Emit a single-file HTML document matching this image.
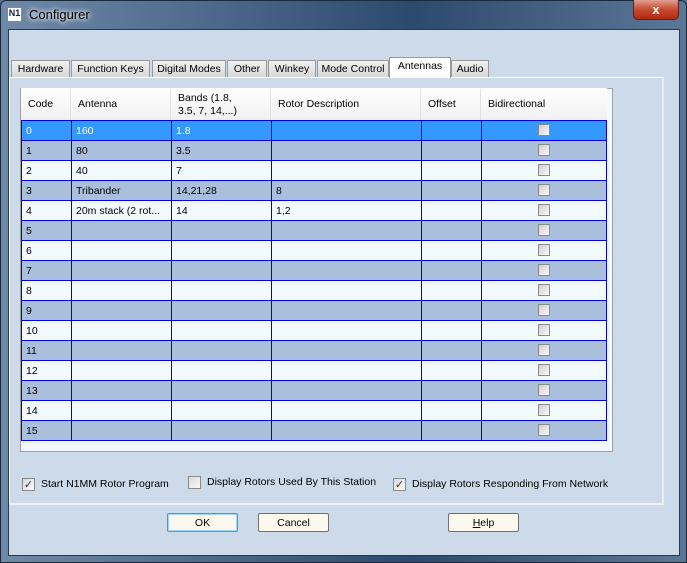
<!DOCTYPE html>
<html><head><style>
*{margin:0;padding:0;box-sizing:border-box}
body{width:687px;height:563px;overflow:hidden;font-family:"Liberation Sans",sans-serif;font-size:10.5px;color:#000;background:#5a7390;position:relative}
.frame{position:absolute;left:0;top:0;width:687px;height:563px;background:linear-gradient(90deg,#6f8aa8 0%,#4d6a8c 30%,#2c4a6d 60%,#5c7796 100%);border:1px solid #1a2a3a;border-radius:6px 6px 0 0}
.title{position:absolute;left:29px;top:7px;font-size:13px;color:#000;text-shadow:0 0 6px #fff,0 0 6px #fff}
.logo{position:absolute;left:7px;top:7px;width:15px;height:15px;background:#fff;border:1px solid #888;font-size:9px;font-weight:bold;color:#224;line-height:10px;text-align:center}
.close{position:absolute;left:633px;top:0;width:46px;height:20px;border:1px solid #5a2020;border-top:none;border-radius:0 0 5px 5px;background:linear-gradient(#e0a090,#c84a30 50%,#b02a10);color:#fff;font-weight:bold;font-size:13px;text-align:center;line-height:19px}
.client{position:absolute;left:8px;top:29px;width:672px;height:527px;background:#cddaea;border:1px solid #2a3a4a}
.tab{position:absolute;top:60px;height:17px;background:linear-gradient(#f0f0f0,#d8d8d8);border:1px solid #999;border-bottom:none;font-size:10.5px;line-height:17px;text-align:center;white-space:nowrap;overflow:hidden}
.tab.sel{top:57px;height:21px;background:#fff;z-index:2;line-height:16px}
.panel{position:absolute;left:9px;top:77px;width:655px;height:428px;border:1px solid #fff;border-right:2px solid #ececec;border-bottom:2px solid #f0f0f0;background:#cddaea}
.tbl{position:absolute;left:20px;top:88px;width:593px;height:364px;background:#f3faff;border:1px solid #a0a0a0}
.hdr{position:absolute;left:21px;top:88px;height:32px;background:linear-gradient(#fff,#f0f0f0)}
.hc{position:absolute;top:89px;height:31px;font-size:10.5px;line-height:13px;display:flex;align-items:center;padding-left:7px;border-right:1px solid #e0e0e0}
.row{position:absolute;left:21px;width:586px;height:21px;border:1px solid #0000e8;border-bottom:none}
.cell{position:absolute;top:0;height:20px;line-height:19px;padding-top:1px;padding-left:4px;border-right:1px solid #0000e8;white-space:nowrap;overflow:hidden}
.cb{position:absolute;left:516px;top:3px;width:12px;height:12px;border:1px solid #8a8a8a;background:linear-gradient(135deg,#cfcfcf,#fafafa)}
.chk{position:absolute;width:13px;height:13px;border:1px solid #8a8a8a;background:linear-gradient(135deg,#dadada,#fafafa);font-size:11px;line-height:12px;text-align:center;color:#334}
.lbl{position:absolute;font-size:10.5px}
.btn{position:absolute;top:513px;height:19px;border:1px solid #707070;border-radius:2px;background:#fdf8ee;text-align:center;line-height:18px;font-size:10.5px}
</style></head><body>
<div class="frame"></div>
<div class="logo">N1</div>
<div class="title">Configurer</div>
<div class="close">x</div>
<div class="client"></div>
<div class="panel"></div>
<div class="tab" style="left:11px;width:59px">Hardware</div>
<div class="tab" style="left:71px;width:79px">Function Keys</div>
<div class="tab" style="left:152px;width:74px">Digital Modes</div>
<div class="tab" style="left:227px;width:40px">Other</div>
<div class="tab" style="left:268px;width:48px">Winkey</div>
<div class="tab" style="left:317px;width:72px">Mode Control</div>
<div class="tab sel" style="left:389px;width:62px">Antennas</div>
<div class="tab" style="left:451px;width:38px">Audio</div>
<div class="tbl"></div>
<div class="hdr" style="width:586px"></div>
<div class="hc" style="left:21px;width:50px">Code</div>
<div class="hc" style="left:71px;width:100px">Antenna</div>
<div class="hc" style="left:171px;width:100px">Bands (1.8,<br>3.5, 7, 14,...)</div>
<div class="hc" style="left:271px;width:150px">Rotor Description</div>
<div class="hc" style="left:421px;width:60px">Offset</div>
<div class="hc" style="left:481px;width:126px;border-right:none">Bidirectional</div>
<div id="rows"></div>
<script>
var d=[["0","160","1.8",""],["1","80","3.5",""],["2","40","7",""],["3","Tribander","14,21,28","8"],["4","20m stack (2 rot...","14","1,2"]];
var h="";
for(var i=0;i<16;i++){var r=d[i]||[String(i),"","",""];
var bg=i==0?"#3399ff":(i%2?"#aabfdc":"#f3faff");var c=i==0?"#fff":"#000";
var bb=i==15?"border-bottom:1px solid #0000e8;":"";
h+='<div class="row" style="top:'+(120+i*20)+'px;background:'+bg+';color:'+c+';'+bb+'">'+
'<div class="cell" style="left:0;width:50px">'+r[0]+'</div>'+
'<div class="cell" style="left:50px;width:100px">'+r[1]+'</div>'+
'<div class="cell" style="left:150px;width:100px">'+r[2]+'</div>'+
'<div class="cell" style="left:250px;width:150px">'+r[3]+'</div>'+
'<div class="cell" style="left:400px;width:60px"></div>'+
'<div class="cb"></div></div>';}
document.getElementById("rows").innerHTML=h;
</script>
<div class="chk" style="left:22px;top:478px">✓</div>
<div class="lbl" style="left:41px;top:478px">Start N1MM Rotor Program</div>
<div class="chk" style="left:188px;top:476px"></div>
<div class="lbl" style="left:207px;top:476px">Display Rotors Used By This Station</div>
<div class="chk" style="left:393px;top:478px">✓</div>
<div class="lbl" style="left:412px;top:478px">Display Rotors Responding From Network</div>
<div class="btn" style="left:167px;width:71px;border:1px solid #3c9fd8;box-shadow:inset 0 0 0 1px #9fd8f4">OK</div>
<div class="btn" style="left:258px;width:71px">Cancel</div>
<div class="btn" style="left:448px;width:71px"><u>H</u>elp</div>
</body></html>
